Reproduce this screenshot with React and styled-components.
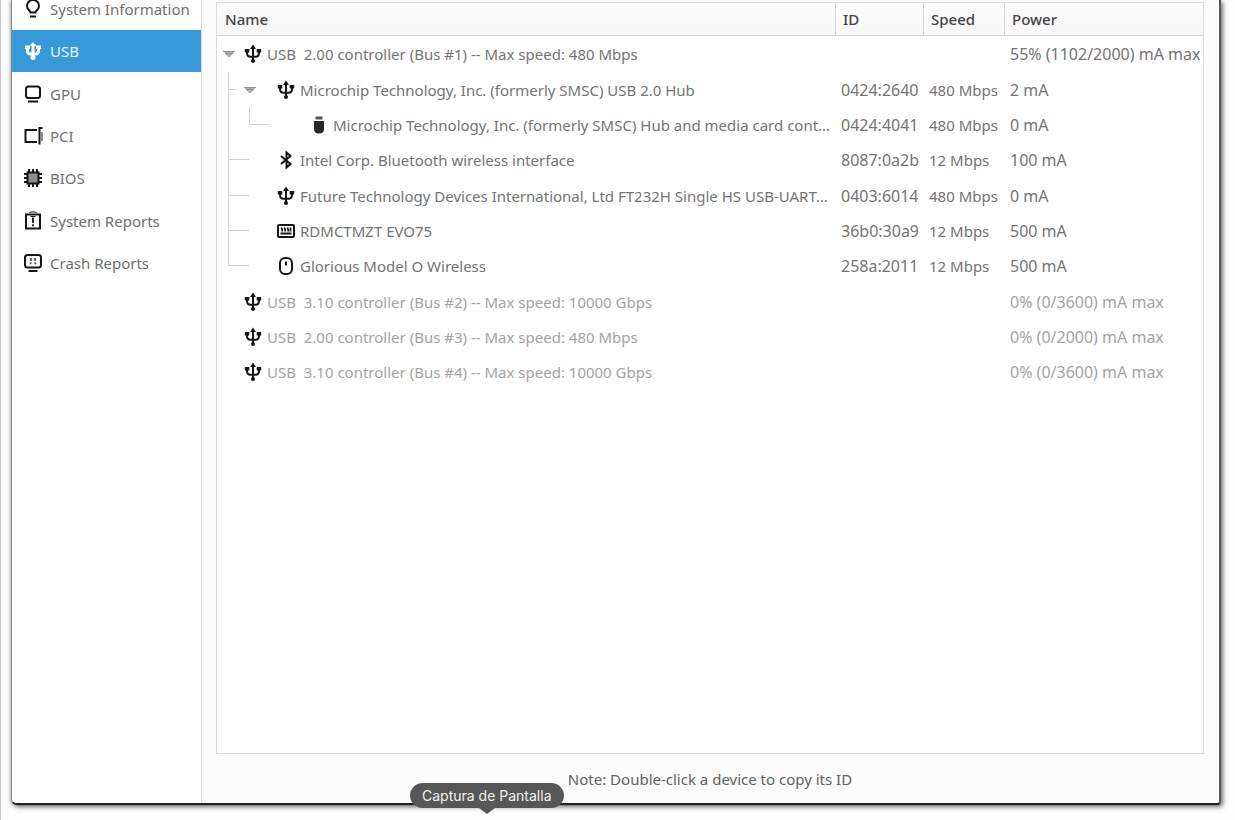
import React from 'react';
import styled, { createGlobalStyle } from 'styled-components';

const GlobalStyle = createGlobalStyle`
  *, *::before, *::after { box-sizing: border-box; }
  body {
    margin: 0;
    background: #fdfdfd;
    font-family: "Noto Sans", "Open Sans", sans-serif;
    font-size: 15px;
    color: #747474;
  }
`;

const Desktop = styled.div`
  height: 100vh;
  min-height: 480px;
  padding: 0 14px 15px 10px;
  border-left: 1px solid #c4c4c4;
  overflow: hidden;
  position: relative;
`;

const Window = styled.div`
  display: flex;
  height: 100%;
  overflow: hidden;
  background: #fcfcfc;
  border: solid;
  border-width: 0 2px 2px 1px;
  border-color: #4c4649 #5c5457 #1d1f22 #8a8a8a;
  border-radius: 0 0 4px 6px;
  box-shadow: 2px 2px 5px rgba(0, 0, 0, 0.55), -1px 0 3px rgba(0, 0, 0, 0.22);
`;

const Sidebar = styled.nav`
  flex: none;
  width: 190px;
  background: #fefefe;
  border-right: 1px solid #dadada;
`;

const NavList = styled.ul`
  list-style: none;
  margin: -12px 0 0;
  padding: 0;
`;

const NavItem = styled.li`
  height: 42px;
  &:nth-child(3n) { height: 43px; }
`;

const NavLink = styled.a`
  display: flex;
  align-items: center;
  gap: 8px;
  height: 100%;
  padding-left: 12px;
  line-height: 18px;
  color: ${(p) => (p.$active ? '#e9f5fd' : '#707070')};
  background: ${(p) => (p.$active ? '#3799d9' : 'transparent')};
  text-decoration: none;
  white-space: nowrap;
  svg { color: ${(p) => (p.$active ? '#ffffff' : '#161616')}; }
`;

const Icon = styled.svg`
  flex: none;
  width: 18px;
  height: 18px;
  fill: none;
  stroke: currentColor;
  stroke-width: 2;
  overflow: visible;
`;

const Main = styled.main`
  flex: 1;
  min-width: 0;
  display: flex;
  flex-direction: column;
  padding: 2px 15px 0 14px;
`;

const TreeFrame = styled.div`
  flex: 1;
  min-height: 0;
  background: #fefefe;
  border: 1px solid #dcdcdc;
`;

const Tree = styled.table`
  width: 100%;
  table-layout: fixed;
  border-collapse: separate;
  border-spacing: 0;
`;

const Col = styled.col`
  width: ${(p) => p.$width};
`;

const HeadCell = styled.th`
  height: 33px;
  padding: 0 8px;
  text-align: left;
  font-weight: 500;
  color: #444444;
  background: linear-gradient(#fcfcfc, #f7f7f7);
  border-bottom: 1px solid #d4d4d4;
  & + & {
    padding-left: 7px;
    border-left: 1px solid #d4d4d4;
  }
`;

const Cell = styled.td`
  padding: 0 0 0 6px;
  font-size: ${(p) => (p.$numeric ? '16px' : '15px')};
  line-height: 20px;
  white-space: nowrap;
`;

const NameCell = styled.td`
  padding: 0 0 0 1px;
  white-space: nowrap;
`;

const NameLine = styled.div`
  display: flex;
  align-items: center;
  height: 35px;
`;

const Row = styled.tr`
  color: ${(p) => (p.$idle ? '#a4a4a4' : '#747474')};
  &:nth-child(3n + 1) ${NameLine} { height: 36px; }
`;

const Slot = styled.span`
  flex: none;
  align-self: stretch;
  display: flex;
  align-items: center;
  justify-content: center;
  width: 21px;
`;

const Toggle = styled.button`
  display: flex;
  padding: 0;
  border: 0;
  background: none;
`;

const Guide = styled.span`
  flex: none;
  align-self: stretch;
  display: flex;
  flex-direction: column;
  width: 21px;
  padding-left: 10px;
`;

const GuideTop = styled.span`
  flex: none;
  height: 18px;
  width: ${(p) => (p.$short ? '9px' : '21px')};
  border-left: 1px solid #d2d2d2;
  border-bottom: ${(p) => (p.$tick ? '1px solid #d2d2d2' : '0')};
`;

const GuideRest = styled.span`
  flex: 1;
  border-left: 1px solid #d2d2d2;
`;

const DeviceIcon = styled.span`
  flex: none;
  display: flex;
  margin-left: ${(p) => 5 + p.$level * 12}px;
  margin-right: 5px;
  color: #161616;
`;

const Note = styled.p`
  flex: none;
  margin: 0;
  height: 49px;
  line-height: 50px;
  text-align: center;
  color: #606060;
`;

const Tooltip = styled.div`
  position: absolute;
  left: 409px;
  bottom: 12px;
  height: 25px;
  padding: 0 12px;
  border-radius: 13px;
  background: #575757;
  color: #f2f2f2;
  font: 14px/25px Inter, Roboto, sans-serif;
  white-space: nowrap;
  &::after {
    content: '';
    position: absolute;
    top: 100%;
    left: 50%;
    margin-left: -8px;
    border: solid transparent;
    border-width: 6px 8px 0;
    border-top-color: #575757;
  }
`;

const icons = {
  bulb: (
    <Icon viewBox="0 0 18 18">
      <path d="M6.6 12.6C6.4 10.8 3 9.600 3 6a6 6 0 0 1 12 0c0 3.600-3.400 4.800-3.600 6.600z" />
      <path d="M6 16.500h6" />
    </Icon>
  ),
  usbBold: (
    <Icon viewBox="0 0 18 18">
      <path d="M9 3v12M3.500 5v3.500q0 3.500 3 3.500h5q3 0 3-3.500V5" strokeWidth="3" />
      <path d="M9 0l3.500 4h-7zM1 3.500h5v3.500H1zM12 3.500h5v3.500h-5z" fill="currentColor" stroke="none" />
      <circle cx="9" cy="15.500" r="2.500" fill="currentColor" stroke="none" />
    </Icon>
  ),
  usb: (
    <Icon viewBox="0 0 18 18">
      <path d="M9 2v14M3 5.500v2.500q0 3.700 3.500 3.700h5q3.500 0 3.500-3.700V5.500" strokeWidth="2" />
      <path d="M9-.5l3 4.500H6zM.8 4h4.500v3.500H.8zM12.700 4h4.500v3.500h-4.500z" fill="currentColor" stroke="none" />
      <circle cx="9" cy="16" r="2" fill="currentColor" stroke="none" />
    </Icon>
  ),
  gpu: (
    <Icon viewBox="0 0 18 18">
      <rect x="2" y="1.500" width="14" height="11.500" rx="2.500" />
      <path d="M4 16.500h10" />
    </Icon>
  ),
  pci: (
    <Icon viewBox="0 0 18 18">
      <path d="M13 3H1.500v12H13M18.500 1h-3v16.500" />
      <path d="M18 5v9" stroke="#8c8c8c" />
    </Icon>
  ),
  bios: (
    <Icon viewBox="0 0 18 18">
      <path d="M5 0v18M9 0v18M13 0v18M0 5h18M0 9h18M0 13h18" strokeWidth="2" />
      <rect x="3.500" y="3.500" width="11" height="11" fill="#8b8b8b" strokeWidth="2" />
    </Icon>
  ),
  report: (
    <Icon viewBox="0 0 18 18">
      <rect x="2" y="2.500" width="14" height="14" />
      <path d="M5 .8q4-1.800 8 0" strokeWidth="1.200" stroke="#555" />
      <path d="M9 5.500v5.500M9 12.200v2" strokeWidth="1.800" />
      <path d="M6.500 4.500h5" strokeWidth="1" />
    </Icon>
  ),
  crash: (
    <Icon viewBox="0 0 18 18">
      <rect x="1" y="1" width="16" height="12.500" rx="2.500" />
      <path d="M4.500 17h9" />
      <path d="M6 4.500l2 2m0-2l-2 2M10 4.500l2 2m0-2l-2 2M6 10l1.500-1.500M12 10l-1.500-1.500" strokeWidth="1.200" stroke="#444" />
    </Icon>
  ),
  stick: (
    <Icon viewBox="0 0 18 18">
      <path d="M5.500.5h7v3h-7z" fill="#555" stroke="none" />
      <path d="M4 5h10v8q0 4.500-5 4.500T4 13z" fill="#262626" stroke="none" />
    </Icon>
  ),
  bluetooth: (
    <Icon viewBox="0 0 18 18">
      <path d="M4 5l9.500 8L9.500 16.500v-15L13.500 5 4 13" />
    </Icon>
  ),
  keyboard: (
    <Icon viewBox="0 0 18 18">
      <rect x="1" y="3" width="16" height="12" rx="1" />
      <path d="M4.500 5.500l1 4M7.500 5.500l1 4M10.500 5.500l1 4M13.500 5.500v4" strokeWidth="1.700" />
      <path d="M3.500 11.500h11" strokeWidth="2" />
    </Icon>
  ),
  mouse: (
    <Icon viewBox="0 0 18 18">
      <rect x="3" y="1" width="12" height="16" rx="5" />
      <path d="M9 4.500v4" />
    </Icon>
  ),
};

const sections = [
  { icon: 'bulb', label: 'System Information' },
  { icon: 'usbBold', label: 'USB', active: true },
  { icon: 'gpu', label: 'GPU' },
  { icon: 'pci', label: 'PCI' },
  { icon: 'bios', label: 'BIOS' },
  { icon: 'report', label: 'System Reports' },
  { icon: 'crash', label: 'Crash Reports' },
];

const devices = [
  { level: 0, open: true, icon: 'usb', name: 'USB  2.00 controller (Bus #1) -- Max speed: 480 Mbps', power: '55% (1102/2000) mA max' },
  { level: 1, open: true, icon: 'usb', name: 'Microchip Technology, Inc. (formerly SMSC) USB 2.0 Hub', id: '0424:2640', speed: '480 Mbps', power: '2 mA' },
  { level: 2, last: true, icon: 'stick', name: 'Microchip Technology, Inc. (formerly SMSC) Hub and media card cont…', id: '0424:4041', speed: '480 Mbps', power: '0 mA' },
  { level: 1, icon: 'bluetooth', name: 'Intel Corp. Bluetooth wireless interface', id: '8087:0a2b', speed: '12 Mbps', power: '100 mA' },
  { level: 1, icon: 'usb', name: 'Future Technology Devices International, Ltd FT232H Single HS USB-UART…', id: '0403:6014', speed: '480 Mbps', power: '0 mA' },
  { level: 1, icon: 'keyboard', name: 'RDMCTMZT EVO75', id: '36b0:30a9', speed: '12 Mbps', power: '500 mA' },
  { level: 1, last: true, icon: 'mouse', name: 'Glorious Model O Wireless', id: '258a:2011', speed: '12 Mbps', power: '500 mA' },
  { level: 0, idle: true, icon: 'usb', name: 'USB  3.10 controller (Bus #2) -- Max speed: 10000 Gbps', power: '0% (0/3600) mA max' },
  { level: 0, idle: true, icon: 'usb', name: 'USB  2.00 controller (Bus #3) -- Max speed: 480 Mbps', power: '0% (0/2000) mA max' },
  { level: 0, idle: true, icon: 'usb', name: 'USB  3.10 controller (Bus #4) -- Max speed: 10000 Gbps', power: '0% (0/3600) mA max' },
];

const DeviceName = styled.span`
  white-space: pre;
`;

function Connector({ tick, last, short }) {
  return (
    <Guide>
      <GuideTop $tick={tick} $short={short} />
      {!last && <GuideRest />}
    </Guide>
  );
}

function DeviceRow({ device }) {
  const { level, open, last, icon, name, id, speed, power, idle } = device;
  return (
    <Row $idle={idle}>
      <NameCell>
        <NameLine>
          {level === 1 && <Connector tick last={last} short={open} />}
          {level === 2 && <Connector />}
          {level === 2 && <Connector tick last={last} />}
          <Slot>
            {open && (
              <Toggle type="button" aria-label="Collapse">
                <svg width="12" height="6" viewBox="0 0 12 6">
                  <path d="M0 0h12L7 6H5z" fill="#b0b0b0" />
                  <path d="M0 .5h12M2 2.500h8" stroke="#909090" />
                </svg>
              </Toggle>
            )}
          </Slot>
          <DeviceIcon $level={level}>{icons[icon]}</DeviceIcon>
          <DeviceName>{name}</DeviceName>
        </NameLine>
      </NameCell>
      <Cell $numeric>{id}</Cell>
      <Cell>{speed}</Cell>
      <Cell $numeric>{power}</Cell>
    </Row>
  );
}

export default function App() {
  return (
    <>
      <GlobalStyle />
      <Desktop>
        <Window>
          <Sidebar>
            <NavList>
              {sections.map((s) => (
                <NavItem key={s.label}>
                  <NavLink href="#" $active={s.active}>
                    {icons[s.icon]}
                    {s.label}
                  </NavLink>
                </NavItem>
              ))}
            </NavList>
          </Sidebar>
          <Main>
            <TreeFrame>
              <Tree>
                <colgroup>
                  <Col $width="auto" />
                  <Col $width="88px" />
                  <Col $width="81px" />
                  <Col $width="199px" />
                </colgroup>
                <thead>
                  <tr>
                    <HeadCell>Name</HeadCell>
                    <HeadCell>ID</HeadCell>
                    <HeadCell>Speed</HeadCell>
                    <HeadCell>Power</HeadCell>
                  </tr>
                </thead>
                <tbody>
                  {devices.map((d) => (
                    <DeviceRow key={d.name} device={d} />
                  ))}
                </tbody>
              </Tree>
            </TreeFrame>
            <Note>Note: Double-click a device to copy its ID</Note>
          </Main>
        </Window>
        <Tooltip role="tooltip">Captura de Pantalla</Tooltip>
      </Desktop>
    </>
  );
}
